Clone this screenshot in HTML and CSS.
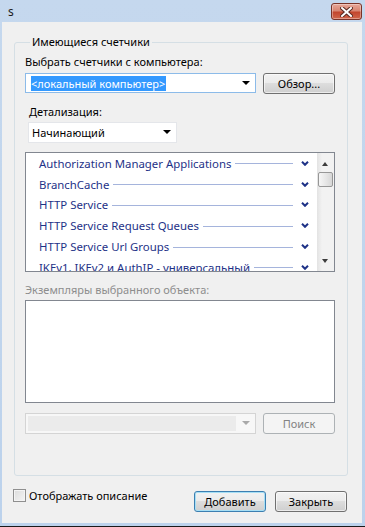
FILE: index.html
```html
<!DOCTYPE html>
<html lang="ru">
<head>
    <meta charset="UTF-8">
    <title>s</title>
    <link rel="stylesheet" href="styles.css">
</head>
<body>
    <div class="window">
        <div class="titlebar">
            <span class="title">s</span>
            <button class="close" aria-label="Закрыть">
                <svg width="13" height="10" viewBox="0 0 13 10">
                    <path d="M2 1 L11 9 M11 1 L2 9" stroke="#5a2a22" stroke-width="4" stroke-linecap="square"/>
                    <path d="M2 1 L11 9 M11 1 L2 9" stroke="#ffffff" stroke-width="2" stroke-linecap="square"/>
                </svg>
            </button>
        </div>

        <div class="client">
            <fieldset class="group">
                <legend>Имеющиеся счетчики</legend>

                <div class="label">Выбрать счетчики с компьютера:</div>
                <div class="row">
                    <div class="combo combo-focus">
                        <span class="selected">&lt;локальный компьютер&gt;</span>
                        <span class="arrow"></span>
                    </div>
                    <button class="btn">Обзор...</button>
                </div>

                <div class="label label-level">Детализация:</div>
                <div class="combo combo-level">
                    <span>Начинающий</span>
                    <span class="arrow"></span>
                </div>

                <div class="listbox">
                    <div class="items">
                        <div class="item"><span>Authorization Manager Applications</span><i class="rule"></i><svg class="chev" width="8" height="5" viewBox="0 0 8 5"><path d="M1 0.8 L4 3.8 L7 0.8" fill="none" stroke="#1e3287" stroke-width="2"/></svg></div>
                        <div class="item"><span>BranchCache</span><i class="rule"></i><svg class="chev" width="8" height="5" viewBox="0 0 8 5"><path d="M1 0.8 L4 3.8 L7 0.8" fill="none" stroke="#1e3287" stroke-width="2"/></svg></div>
                        <div class="item"><span>HTTP Service</span><i class="rule"></i><svg class="chev" width="8" height="5" viewBox="0 0 8 5"><path d="M1 0.8 L4 3.8 L7 0.8" fill="none" stroke="#1e3287" stroke-width="2"/></svg></div>
                        <div class="item"><span>HTTP Service Request Queues</span><i class="rule"></i><svg class="chev" width="8" height="5" viewBox="0 0 8 5"><path d="M1 0.8 L4 3.8 L7 0.8" fill="none" stroke="#1e3287" stroke-width="2"/></svg></div>
                        <div class="item"><span>HTTP Service Url Groups</span><i class="rule"></i><svg class="chev" width="8" height="5" viewBox="0 0 8 5"><path d="M1 0.8 L4 3.8 L7 0.8" fill="none" stroke="#1e3287" stroke-width="2"/></svg></div>
                        <div class="item"><span>IKEv1, IKEv2 и AuthIP - универсальный</span><i class="rule"></i><svg class="chev" width="8" height="5" viewBox="0 0 8 5"><path d="M1 0.8 L4 3.8 L7 0.8" fill="none" stroke="#1e3287" stroke-width="2"/></svg></div>
                    </div>
                    <div class="scrollbar">
                        <span class="sb-up"></span>
                        <span class="sb-thumb"></span>
                        <span class="sb-down"></span>
                    </div>
                </div>

                <div class="label disabled">Экземпляры выбранного объекта:</div>
                <div class="instances"></div>

                <div class="row row-search">
                    <div class="combo combo-disabled">
                        <span class="fill"></span>
                        <span class="arrow"></span>
                    </div>
                    <button class="btn" disabled>Поиск</button>
                </div>
            </fieldset>

            <div class="footer">
                <label class="check"><span class="box"></span>Отображать описание</label>
                <div class="buttons">
                    <button class="btn btn-default">Добавить</button>
                    <button class="btn">Закрыть</button>
                </div>
            </div>
        </div>
    </div>
</body>
</html>
```

FILE: styles.css
```css
body {
    margin: 0;
    font-family: "Noto Sans", Roboto, sans-serif;
    font-size: 11px;
    color: #000;
}

.window {
    width: 365px;
    height: 527px;
    box-sizing: border-box;
    background: linear-gradient(#c5d8ee, #bcd2ec);
    border-bottom: 1px solid #1a1a1a;
    display: flex;
    flex-direction: column;
}

.titlebar {
    height: 22px;
    display: flex;
    align-items: flex-start;
    justify-content: space-between;
    flex-shrink: 0;
}

.title {
    margin: 4px 0 0 8px;
    line-height: 15px;
    font-size: 12px;
    color: #1b1b1b;
}

.close {
    width: 31px;
    height: 17px;
    margin: 3px 3px 0 0;
    padding: 0;
    border: 1px solid #7a3328;
    border-radius: 3px;
    background: linear-gradient(#e7a799 0%, #d88572 45%, #c2462e 55%, #d0664c 100%);
    box-shadow: inset 0 0 0 1px rgba(255, 255, 255, 0.35);
    display: flex;
    align-items: center;
    justify-content: center;
}

.client {
    margin: 0 3px 0 2px;
    height: 501px;
    background: #f0f0f0;
}

.group {
    width: 334px;
    box-sizing: border-box;
    margin: 13px 0 0 12px;
    padding: 5px 12px 41px 10px;
    border: 1px solid #d5dfe5;
    border-radius: 3px;
}

.group legend {
    margin-left: 5px;
    padding: 0 2px;
    line-height: 14px;
}

.label {
    line-height: 15px;
}

.label-level {
    margin: 10px 0 0 4px;
}

.disabled {
    color: #8d8d8d;
    margin-top: 10px;
}

.row {
    display: flex;
    justify-content: space-between;
    align-items: flex-start;
    margin-top: 4px;
}

.combo {
    position: relative;
    box-sizing: border-box;
    height: 20px;
    background: #fff;
    border: 1px solid #abadb3;
    display: flex;
    align-items: center;
    padding-left: 5px;
}

.combo .arrow {
    position: absolute;
    right: 5px;
    top: 7px;
    border-left: 4px solid transparent;
    border-right: 4px solid transparent;
    border-top: 4px solid #000;
}

.combo-focus {
    width: 231px;
    border-color: #8cbbe9;
}

.selected {
    background: #3399ff;
    color: #fff;
    line-height: 15px;
    padding-right: 1px;
}

.combo-level {
    width: 149px;
    height: 21px;
    margin: 3px 0 0 3px;
    border-color: #e4e6ea;
    padding-left: 3px;
}

.combo-disabled {
    width: 231px;
    height: 21px;
    padding: 2px;
    border-color: #d4d4d4;
    background: #f7f7f7;
}

.combo-disabled .fill {
    width: 208px;
    height: 100%;
    background: #ebebeb;
}

.combo-disabled .arrow {
    border-top-color: #a9a9a9;
}

.btn {
    width: 72px;
    height: 21px;
    padding: 0;
    font-family: inherit;
    font-size: 11px;
    color: #000;
    border: 1px solid #707070;
    border-radius: 3px;
    background: linear-gradient(#f2f2f2 0%, #ebebeb 50%, #dddddd 50%, #cfcfcf 100%);
    box-shadow: inset 0 0 0 1px rgba(255, 255, 255, 0.6);
}

.btn:disabled {
    color: #838383;
    border-color: #adb2b5;
    background: #f4f4f4;
    box-shadow: none;
}

.btn-default {
    border-color: #3c7fb1;
    box-shadow: inset 0 0 0 1px #a7dff5;
}

.listbox {
    margin-top: 9px;
    height: 120px;
    box-sizing: border-box;
    border: 1px solid #828790;
    background: #fff;
    display: flex;
    overflow: hidden;
}

.items {
    flex: 1;
    padding: 0 8px 0 13px;
}

.item {
    height: 20.8px;
    display: flex;
    align-items: center;
    font-size: 11.4px;
    color: #1e3287;
    white-space: nowrap;
}

.rule {
    flex: 1;
    height: 1px;
    margin: 1px 8px 0 4px;
    background: #a5b4dc;
}

.chev {
    flex-shrink: 0;
}

.scrollbar {
    width: 17px;
    position: relative;
    background: linear-gradient(90deg, #e3e3e3, #f2f2f2 30%, #f2f2f2);
}

.sb-up,
.sb-down {
    position: absolute;
    left: 5px;
    border-left: 3.5px solid transparent;
    border-right: 3.5px solid transparent;
}

.sb-up {
    top: 9px;
    border-bottom: 4px solid #3c3c3c;
}

.sb-down {
    bottom: 8px;
    border-top: 4px solid #3c3c3c;
}

.sb-thumb {
    position: absolute;
    left: 1px;
    top: 19px;
    width: 15px;
    height: 15px;
    box-sizing: border-box;
    border: 1px solid #979797;
    border-radius: 2px;
    background: linear-gradient(90deg, #f6f6f6, #e4e4e4 60%, #d6d6d6);
}

.instances {
    margin-top: 3px;
    height: 103px;
    box-sizing: border-box;
    border: 1px solid #828790;
    background: #fff;
}

.row-search {
    margin-top: 10px;
}

.footer {
    display: flex;
    justify-content: space-between;
    align-items: flex-start;
    padding: 12px 15px 0 11px;
}

.check {
    display: flex;
    align-items: center;
    gap: 3px;
    line-height: 15px;
}

.box {
    width: 13px;
    height: 13px;
    box-sizing: border-box;
    border: 1px solid #8f8f8f;
    background: linear-gradient(135deg, #dcdcdc, #f4f4f4);
    box-shadow: inset 0 0 0 1px #f4f4f4;
}

.buttons {
    display: flex;
    gap: 9px;
    margin-top: 3px;
}
```
